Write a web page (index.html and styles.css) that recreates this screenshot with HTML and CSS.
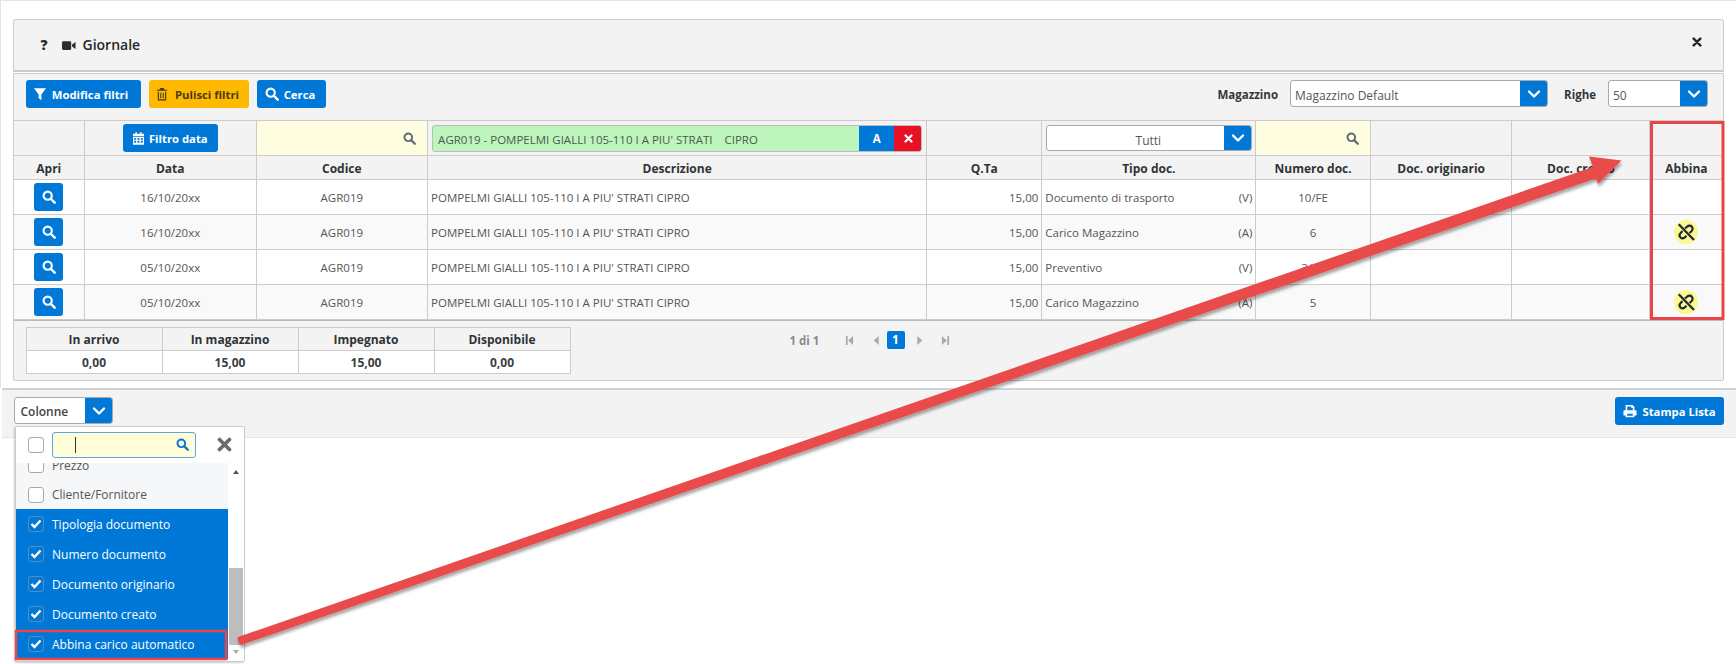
FILE: index.html
```html
<!DOCTYPE html>
<html lang="it">
<head>
	<meta charset="UTF-8">
	<title>Giornale</title>
	<link rel="stylesheet" href="styles.css">
</head>
<body>
	<svg class="sprite" width="0" height="0">
		<defs>
			<symbol id="i-search" viewBox="0 0 16 16"><circle cx="6.5" cy="6.5" r="4.7" fill="none" stroke="currentColor" stroke-width="2.4"/><path d="M10 10l4.5 4.5" stroke="currentColor" stroke-width="2.8" stroke-linecap="round"/></symbol>
			<symbol id="i-filter" viewBox="0 0 16 16"><path d="M1 1.5h14L9.6 8.2V15L6.4 12.600V8.200z" fill="currentColor"/></symbol>
			<symbol id="i-trash" viewBox="0 0 14 16"><path d="M5 1h4l1 2h3v1.300H1V3h3zM2.200 5.300h1.300V14h7V5.300h1.300V15.300H2.200zM5 6.500h1.200v6.300H5zM7.800 6.500H9v6.300H7.800z" fill="currentColor"/></symbol>
			<symbol id="i-calendar" viewBox="0 0 14 16"><path d="M3 0h2v2h4V0h2v2h3v3H0V2h3zM0 6h14v10H0zM1.500 7.500v2h2.500v-2zM5.700 7.500v2h2.600v-2zM10 7.500v2h2.500v-2zM1.500 11v2.500h2.500V11zM5.700 11v2.500h2.600V11zM10 11v2.500h2.500V11z" fill="currentColor" fill-rule="evenodd"/></symbol>
			<symbol id="i-video" viewBox="0 0 16 12"><rect x="0" y="1" width="10.500" height="10" rx="1.500" fill="currentColor"/><path d="M11.500 4.800L15.500 2v8l-4-2.800z" fill="currentColor"/></symbol>
			<symbol id="i-print" viewBox="0 0 16 16"><path d="M3 1h8l2 2v4h1.200c.7 0 1.300.6 1.300 1.300V13h-2.500v2H3v-2H.5V8.300C.5 7.600 1.100 7 1.800 7H3zM4.800 2.800V7h6.400V4.500H9.500V2.800zM4.800 11v2.300h6.400V11z" fill="currentColor" fill-rule="evenodd"/></symbol>
			<symbol id="i-close" viewBox="0 0 12 12"><path d="M2 2l8 8M10 2l-8 8" stroke="currentColor" stroke-width="3" stroke-linecap="round"/></symbol>
			<symbol id="i-chevron" viewBox="0 0 14 10"><path d="M2 2.500l5 5 5-5" fill="none" stroke="currentColor" stroke-width="2.400" stroke-linecap="round" stroke-linejoin="round"/></symbol>
			<symbol id="i-check" viewBox="0 0 12 10"><path d="M1.500 5l3 3 6-6.500" fill="none" stroke="currentColor" stroke-width="2.400"/></symbol>
			<symbol id="i-unlink" viewBox="0 0 24 24"><circle cx="12" cy="12" r="12" fill="#fbf88f"/><path d="M11 8.500l2-1.800c1.500-1.400 3.700-1.400 4.800 0 1.200 1.300 1 3.300-.3 4.500L15.500 13M8.500 11l-1.800 2c-1.400 1.400-1.400 3.300-.2 4.500 1.200 1.200 3.200 1.200 4.500-.2l1.500-1.500" fill="none" stroke="#1f2a33" stroke-width="2.200"/><path d="M4.700 4.300L20 20" stroke="#1f2a33" stroke-width="2.300"/></symbol>
			<symbol id="i-first" viewBox="0 0 10 12"><path d="M1 1h2v10H1zM9 1v10L3.500 6z" fill="currentColor"/></symbol>
			<symbol id="i-prev" viewBox="0 0 6 12"><path d="M6 1v10L.5 6z" fill="currentColor"/></symbol>
			<symbol id="i-next" viewBox="0 0 6 12"><path d="M0 1v10l5.500-5z" fill="currentColor"/></symbol>
			<symbol id="i-last" viewBox="0 0 10 12"><path d="M9 1H7v10h2zM1 1v10l5.500-5z" fill="currentColor"/></symbol>
		</defs>
	</svg>

	<div class="page">
		<div class="title-bar">
			<div class="title">
				<span class="help">?</span>
				<svg class="ico-video"><use href="#i-video"/></svg>
				<span>Giornale</span>
			</div>
			<svg class="ico-close"><use href="#i-close"/></svg>
		</div>

		<div class="panel">
			<div class="toolbar">
				<div class="btn-row">
					<a class="btn"><svg class="ico"><use href="#i-filter"/></svg>Modifica filtri</a>
					<a class="btn btn-yellow"><svg class="ico"><use href="#i-trash"/></svg>Pulisci filtri</a>
					<a class="btn"><svg class="ico"><use href="#i-search"/></svg>Cerca</a>
				</div>
				<div class="toolbar-right">
					<label class="lbl">Magazzino</label>
					<div class="combo combo-mag"><span class="combo-val">Magazzino Default</span><span class="combo-btn"><svg class="ico-chev"><use href="#i-chevron"/></svg></span></div>
					<label class="lbl lbl-righe">Righe</label>
					<div class="combo combo-righe"><span class="combo-val">50</span><span class="combo-btn"><svg class="ico-chev"><use href="#i-chevron"/></svg></span></div>
				</div>
			</div>

			<table class="grid">
				<colgroup>
					<col class="c-apri"><col class="c-data"><col class="c-codice"><col class="c-descr"><col class="c-qta"><col class="c-tipo"><col class="c-num"><col class="c-orig"><col class="c-creato"><col class="c-abbina">
				</colgroup>
				<thead>
					<tr class="filter-row">
						<td></td>
						<td class="center"><a class="btn btn-date"><svg class="ico"><use href="#i-calendar"/></svg>Filtro data</a></td>
						<td class="filter-yellow"><svg class="ico-find"><use href="#i-search"/></svg></td>
						<td>
							<div class="chosen">
								<span class="chosen-text">AGR019 - POMPELMI GIALLI 105-110 I A PIU' STRATI &nbsp;&nbsp; CIPRO</span>
								<span class="chosen-a">A</span>
								<span class="chosen-x"><svg class="ico-x"><use href="#i-close"/></svg></span>
							</div>
						</td>
						<td></td>
						<td>
							<div class="combo combo-tipo"><span class="combo-val center">Tutti</span><span class="combo-btn"><svg class="ico-chev"><use href="#i-chevron"/></svg></span></div>
						</td>
						<td class="filter-yellow"><svg class="ico-find"><use href="#i-search"/></svg></td>
						<td></td>
						<td></td>
						<td></td>
					</tr>
					<tr class="head-row">
						<th>Apri</th><th>Data</th><th>Codice</th><th>Descrizione</th><th>Q.Ta</th><th>Tipo doc.</th><th>Numero doc.</th><th>Doc. originario</th><th>Doc. creato</th><th>Abbina</th>
					</tr>
				</thead>
				<tbody>
					<tr>
						<td class="center"><a class="btn btn-open"><svg class="ico"><use href="#i-search"/></svg></a></td>
						<td class="center">16/10/20xx</td><td class="center">AGR019</td>
						<td>POMPELMI GIALLI 105-110 I A PIU' STRATI CIPRO</td>
						<td class="right">15,00</td>
						<td><div class="tipo"><span>Documento di trasporto</span><span>(V)</span></div></td>
						<td class="center">10/FE</td><td></td><td></td><td></td>
					</tr>
					<tr>
						<td class="center"><a class="btn btn-open"><svg class="ico"><use href="#i-search"/></svg></a></td>
						<td class="center">16/10/20xx</td><td class="center">AGR019</td>
						<td>POMPELMI GIALLI 105-110 I A PIU' STRATI CIPRO</td>
						<td class="right">15,00</td>
						<td><div class="tipo"><span>Carico Magazzino</span><span>(A)</span></div></td>
						<td class="center">6</td><td></td><td></td>
						<td class="center"><svg class="ico-unlink"><use href="#i-unlink"/></svg></td>
					</tr>
					<tr>
						<td class="center"><a class="btn btn-open"><svg class="ico"><use href="#i-search"/></svg></a></td>
						<td class="center">05/10/20xx</td><td class="center">AGR019</td>
						<td>POMPELMI GIALLI 105-110 I A PIU' STRATI CIPRO</td>
						<td class="right">15,00</td>
						<td><div class="tipo"><span>Preventivo</span><span>(V)</span></div></td>
						<td class="center">3/22</td><td></td><td></td><td></td>
					</tr>
					<tr>
						<td class="center"><a class="btn btn-open"><svg class="ico"><use href="#i-search"/></svg></a></td>
						<td class="center">05/10/20xx</td><td class="center">AGR019</td>
						<td>POMPELMI GIALLI 105-110 I A PIU' STRATI CIPRO</td>
						<td class="right">15,00</td>
						<td><div class="tipo"><span>Carico Magazzino</span><span>(A)</span></div></td>
						<td class="center">5</td><td></td><td></td>
						<td class="center"><svg class="ico-unlink"><use href="#i-unlink"/></svg></td>
					</tr>
				</tbody>
			</table>

			<div class="under-grid">
				<table class="totals">
					<tr><th>In arrivo</th><th>In magazzino</th><th>Impegnato</th><th>Disponibile</th></tr>
					<tr><td>0,00</td><td>15,00</td><td>15,00</td><td>0,00</td></tr>
				</table>
				<div class="pager">
					<span class="pager-info">1 di 1</span>
					<svg class="pg pg-first"><use href="#i-first"/></svg>
					<svg class="pg pg-prev"><use href="#i-prev"/></svg>
					<span class="pg-current">1</span>
					<svg class="pg pg-next"><use href="#i-next"/></svg>
					<svg class="pg pg-last"><use href="#i-last"/></svg>
				</div>
			</div>
		</div>
	</div>

	<div class="footer">
		<div class="combo combo-col"><span class="combo-val">Colonne</span><span class="combo-btn"><svg class="ico-chev"><use href="#i-chevron"/></svg></span></div>
		<a class="btn btn-print"><svg class="ico"><use href="#i-print"/></svg>Stampa Lista</a>
	</div>

	<div class="dropdown">
		<div class="dd-head">
			<span class="chk"></span>
			<div class="dd-search"><span class="caret"></span><svg class="ico-dd-find"><use href="#i-search"/></svg></div>
			<svg class="ico-dd-close"><use href="#i-close"/></svg>
		</div>
		<div class="dd-body">
			<div class="dd-list">
				<div class="dd-item dd-clip"><span class="chk"></span>Prezzo</div>
				<div class="dd-item"><span class="chk"></span>Cliente/Fornitore</div>
				<div class="dd-item on"><span class="chk"><svg class="ico-check"><use href="#i-check"/></svg></span>Tipologia documento</div>
				<div class="dd-item on"><span class="chk"><svg class="ico-check"><use href="#i-check"/></svg></span>Numero documento</div>
				<div class="dd-item on"><span class="chk"><svg class="ico-check"><use href="#i-check"/></svg></span>Documento originario</div>
				<div class="dd-item on"><span class="chk"><svg class="ico-check"><use href="#i-check"/></svg></span>Documento creato</div>
				<div class="dd-item on"><span class="chk"><svg class="ico-check"><use href="#i-check"/></svg></span>Abbina carico automatico</div>
			</div>
			<div class="dd-scroll">
				<span class="arrow-up"></span>
				<span class="thumb"></span>
				<span class="arrow-down"></span>
			</div>
		</div>
	</div>

	<!-- annotation drawn on top of the screenshot -->
	<svg class="notes" width="1736" height="664" viewBox="0 0 1736 664">
		<defs>
			<filter id="soft" x="-5%" y="-5%" width="110%" height="110%"><feDropShadow dx="1" dy="3" stdDeviation="1.500" flood-color="#000" flood-opacity=".35"/></filter>
		</defs>
		<rect x="1651.500" y="122.500" width="71.500" height="196" fill="none" stroke="#e8474a" stroke-width="3"/>
		<rect x="16" y="631" width="210" height="28" fill="none" stroke="#e8474a" stroke-width="2.500"/>
		<g filter="url(#soft)">
			<path d="M241 645L1596 178.500L1598 184L1621.500 160.500L1589 156.500L1593 167L238 637Q236 641 241 645Z" fill="#e84c4a"/>
		</g>
	</svg>
</body>
</html>
```

FILE: styles.css
```css
* {
	box-sizing: border-box;
}
html, body {
	margin: 0;
	padding: 0;
}
body {
	position: relative;
	width: 1736px;
	height: 664px;
	overflow: hidden;
	background: #fff;
	font-family: "Open Sans", sans-serif;
	font-size: 11.500px;
	color: #555;
}
.sprite {
	position: absolute;
}
svg {
	display: inline-block;
}

.page {
	height: 388px;
	padding: 18px 12px 0 11.500px;
	border-top: 1px solid #dfe5ec;
	border-left: 1px solid #dfe5ec;
}
.title-bar {
	display: flex;
	justify-content: space-between;
	height: 53px;
	padding: 16px 21px 0 22px;
	background: #f3f3f3;
	border: 1px solid #ccc;
	border-bottom-width: 2px;
	border-radius: 3px 3px 0 0;
}
.title {
	display: flex;
	align-items: flex-start;
	font-size: 14px;
	font-weight: 600;
	color: #23282c;
	line-height: 18px;
}
.help {
	width: 26px;
	padding-left: 5px;
	font-weight: 800;
	font-size: 14px;
}
.ico-video {
	width: 14px;
	height: 11px;
	margin: 4px 7px 0 0;
	color: #2b2f33;
}
.ico-close {
	width: 10px;
	height: 10px;
	margin-top: 1px;
	color: #23282c;
}

.panel {
	height: 308px;
	margin-top: 1px;
	background: #f3f3f3;
	border: 1px solid #ccc;
	border-radius: 0 0 2px 2px;
}
.toolbar {
	display: flex;
	justify-content: space-between;
	height: 46px;
	padding: 6px 15px 0 12px;
}
.btn-row {
	display: flex;
	gap: 8px;
}
.btn {
	display: inline-flex;
	align-items: center;
	justify-content: center;
	height: 28px;
	background: #0078d7;
	color: #fff;
	font-size: 11.300px;
	font-weight: 700;
	border-radius: 3px;
}
.btn .ico {
	width: 14px;
	height: 14px;
	margin-right: 5px;
}
.btn-row .btn:nth-child(1) {
	width: 115px;
	padding-right: 5px;
}
.btn-row .btn:nth-child(2) {
	width: 100px;
	padding-right: 3px;
}
.btn-row .btn:nth-child(3) {
	width: 69px;
	padding-right: 2px;
}
.btn-yellow {
	background: #ffb900;
	color: #4a3c10;
}
.btn-yellow .ico {
	margin-right: 6px;
}
.toolbar-right {
	display: flex;
	align-items: flex-start;
}
.lbl {
	margin: 7px 12px 0 0;
	color: #32373b;
	font-weight: 700;
	font-size: 11.500px;
}
.lbl-righe {
	margin-left: 16px;
}

.combo {
	display: flex;
	height: 27px;
	background: #fff;
	border: 1px solid #aaa;
	border-radius: 3px;
	overflow: hidden;
}
.combo-val {
	flex: 1;
	padding: 0 4px;
	line-height: 27px;
	font-size: 12px;
	color: #555;
}
.combo-val.center {
	padding-left: 30px;
}
.combo-btn {
	display: flex;
	align-items: center;
	justify-content: center;
	width: 28px;
	margin: -1px -1px -1px 0;
	background: #0078d7;
	color: #fff;
}
.ico-chev {
	width: 14px;
	height: 10px;
}
.combo-mag {
	width: 258px;
}
.combo-righe {
	width: 100px;
}
.combo-mag .combo-val, .combo-righe .combo-val {
	line-height: 30px;
}
.combo-tipo {
	height: 26px;
	width: 206px;
	margin: 0 auto;
}
.combo-tipo .combo-val {
	line-height: 29px;
	text-align: center;
}
.combo-col {
	width: 99px;
}
.combo-col .combo-val {
	padding-left: 6px;
	font-weight: 600;
	color: #444;
}

.grid {
	width: 1709px;
	table-layout: fixed;
	border-collapse: collapse;
	background: #fff;
}
.grid td, .grid th {
	padding: 0 3px;
	border: 1px solid #ccc;
	white-space: nowrap;
	overflow: hidden;
}
.grid tr > :first-child {
	border-left: 0;
}
.grid tr > :last-child {
	border-right: 0;
}
.c-apri { width: 71px; }
.c-data { width: 171.500px; }
.c-codice { width: 171.500px; }
.c-descr { width: 499px; }
.c-qta { width: 115px; }
.c-tipo { width: 214px; }
.c-num { width: 114.500px; }
.c-orig { width: 141.500px; }
.c-creato { width: 138px; }
.c-abbina { width: 72.500px; }

.filter-row {
	height: 35px;
	background: #f3f3f3;
}
.filter-yellow {
	background: #fefde0;
	text-align: right;
}
.grid .filter-yellow {
	padding-right: 11px;
}
.ico-find {
	width: 13px;
	height: 13px;
	margin-top: 3px;
	color: #5f6b70;
}
.head-row {
	height: 24px;
	background: #f3f3f3;
}
.grid .head-row th {
	padding-top: 2px;
	font-size: 12px;
	font-weight: 700;
	color: #2f3336;
}
.grid tbody tr {
	height: 35px;
}
.grid tbody tr:nth-child(even) {
	background: #f9f9f9;
}
.center {
	text-align: center;
}
.right {
	text-align: right;
}
.btn-date {
	width: 95px;
	vertical-align: middle;
}
.btn-date .ico {
	width: 11px;
	height: 13px;
}
.btn-open {
	width: 29px;
	vertical-align: middle;
}
.btn-open .ico {
	margin: 0;
}
.chosen {
	display: flex;
	height: 27px;
	width: 490px;
	margin-left: 1px;
	line-height: 27px;
	background: #bdf5bd;
	border: 1px solid #bbb;
	border-radius: 3px;
	overflow: hidden;
}
.chosen-text {
	flex: 1;
	padding-left: 5px;
	color: #4c5a4c;
	font-size: 11.500px;
}
.chosen-a {
	width: 35px;
	margin: -1px 0;
	background: #0078d7;
	color: #fff;
	text-align: center;
	font-weight: 700;
}
.chosen-x {
	display: flex;
	align-items: center;
	justify-content: center;
	width: 28px;
	margin: -1px -1px -1px 0;
	background: #e81123;
	color: #fff;
}
.ico-x {
	width: 9px;
	height: 9px;
}
.tipo {
	display: flex;
	justify-content: space-between;
}
.ico-unlink {
	width: 24px;
	height: 24px;
	vertical-align: middle;
}

.under-grid {
	display: flex;
	padding: 6px 0 0 12px;
	border-top: 1px solid #bbb;
}
.totals {
	width: 545px;
	height: 47px;
	table-layout: fixed;
	border-collapse: collapse;
	background: #fff;
	border: 1px solid #ccc;
}
.totals th, .totals td {
	padding: 0;
	border: 1px solid #ccc;
	text-align: center;
	font-size: 12px;
	font-weight: 700;
	color: #3a3f43;
}
.totals th {
	background: #f3f3f3;
	color: #2f3336;
}
.pager {
	display: flex;
	align-items: center;
	align-self: flex-start;
	height: 18px;
	margin: 4px 0 0 219px;
	color: #aaa;
}
.pager-info {
	width: 55px;
	font-weight: 700;
	font-size: 11.500px;
	color: #8c8c8c;
}
.pg {
	width: 9px;
	height: 11px;
}
.pg-prev {
	width: 6px;
	margin-left: 19px;
}
.pg-current {
	width: 18px;
	height: 18px;
	margin: 0 12px 0 8px;
	background: #0078d7;
	color: #fff;
	border-radius: 2px;
	text-align: center;
	line-height: 18px;
	font-weight: 700;
	font-size: 12px;
}
.pg-next {
	width: 6px;
}
.pg-last {
	margin-left: 18px;
}

.footer {
	display: flex;
	justify-content: space-between;
	align-items: flex-start;
	height: 50px;
	margin-left: 2px;
	padding: 7px 12px 0 11.500px;
	background: #f3f3f3;
	border-top: 2px solid #d0d4d6;
	border-bottom: 1px solid #e6e6e6;
}
.btn-print {
	width: 109px;
}
.btn-print .ico {
	margin-right: 5px;
}

.dropdown {
	position: absolute;
	left: 15px;
	top: 426px;
	width: 230px;
	height: 236px;
	background: #fff;
	border: 1px solid #ccc;
	border-radius: 2px;
	box-shadow: -1px 1px 2px rgba(0, 0, 0, .2);
	z-index: 2;
}
.dd-head {
	position: relative;
	z-index: 1;
	display: flex;
	align-items: center;
	height: 36px;
	padding: 0 0 1px 12px;
	background: #fff;
}
.chk {
	display: inline-flex;
	align-items: center;
	justify-content: center;
	flex: none;
	width: 16px;
	height: 16px;
	background: #fff;
	border: 1px solid #aaa;
	border-radius: 3px;
}
.dd-search {
	display: flex;
	align-items: center;
	justify-content: space-between;
	width: 144px;
	height: 26px;
	margin-left: 8px;
	padding: 0 6px 0 22px;
	background: #fefdd8;
	border: 1px solid #5ba8e0;
	border-radius: 3px;
}
.caret {
	width: 1px;
	height: 16px;
	background: #333;
}
.ico-dd-find {
	width: 13px;
	height: 13px;
	color: #0078d7;
}
.ico-dd-close {
	width: 15px;
	height: 15px;
	margin-left: 21px;
	color: #6b6b6b;
}
.dd-body {
	display: flex;
	height: 198px;
}
.dd-list {
	width: 212px;
	height: 198px;
	overflow: hidden;
	background: #f5f7f8;
}
.dd-item {
	display: flex;
	align-items: center;
	height: 30px;
	padding-left: 12px;
	font-size: 12px;
	color: #555;
}
.dd-item .chk {
	margin-right: 8px;
}
.dd-clip {
	margin-top: -13px;
}
.dd-clip + .dd-item {
	height: 29px;
}
.dd-item.on {
	background: #0078d7;
	color: #fff;
}
.dd-item.on .chk {
	background: #0078d7;
	border-color: #5a8db5;
}
.ico-check {
	width: 12px;
	height: 10px;
	color: #fff;
}
.dd-scroll {
	position: relative;
	flex: 1;
	background: #fff;
}
.arrow-up, .arrow-down {
	position: absolute;
	left: 5px;
	border-left: 3.500px solid transparent;
	border-right: 3.500px solid transparent;
}
.arrow-up {
	top: 7px;
	border-bottom: 4px solid #555;
}
.arrow-down {
	bottom: 7px;
	border-top: 4px solid #aaa;
}
.thumb {
	position: absolute;
	left: 1px;
	right: 1px;
	top: 105px;
	height: 77px;
	background: #bdbdbd;
}

.notes {
	position: absolute;
	left: 0;
	top: 0;
	z-index: 3;
	pointer-events: none;
}
```
